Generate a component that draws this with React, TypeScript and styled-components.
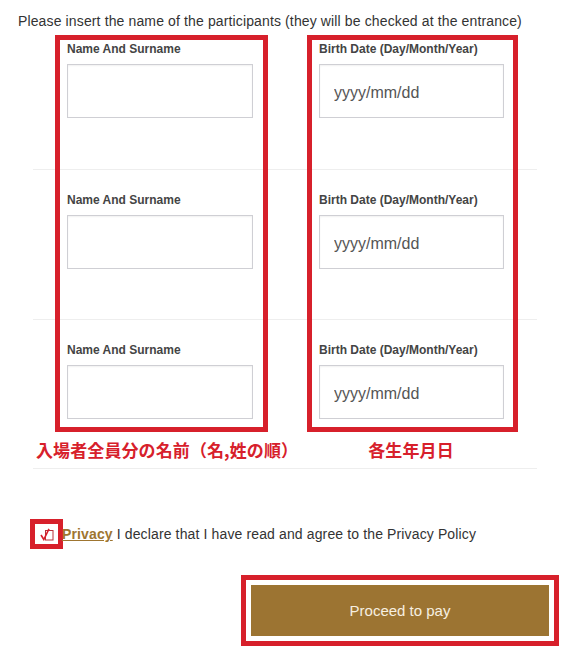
import styled, { createGlobalStyle } from "styled-components";

const GlobalStyle = createGlobalStyle`
  html, body {
    margin: 0;
    padding: 0;
    background: #fff;
  }
  body {
    font-family: "Liberation Sans", Arial, sans-serif;
    color: #333;
  }
  * {
    box-sizing: border-box;
  }
`;

const Page = styled.div`
  width: 575px;
  height: 660px;
  padding-top: 11px;
`;

const Intro = styled.p`
  margin: 0 0 0 18px;
  font-size: 14px;
  line-height: 20px;
  letter-spacing: 0.13px;
  color: #333;
  white-space: nowrap;
`;

const Form = styled.div`
  position: relative;
  width: 504px;
  margin-left: 33px;
`;

const Row = styled.div<{ $first?: boolean; $last?: boolean }>`
  display: grid;
  grid-template-columns: 252px 252px;
  height: ${(p) => (p.$first ? "138px" : p.$last ? "auto" : "150px")};
  padding-top: ${(p) => (p.$first ? "11px" : "23px")};
  border-top: ${(p) => (p.$first ? "none" : "1px solid #eeeeee")};
`;

const Field = styled.div`
  padding-left: 34px;
`;

const Label = styled.div`
  font-size: 12px;
  line-height: 14px;
  font-weight: bold;
  color: #444;
  margin-bottom: 8px;
`;

const Input = styled.input<{ $w: number }>`
  display: block;
  width: ${(p) => p.$w}px;
  height: 54px;
  border: 1px solid #cfcfd4;
  box-shadow: inset 0 1px 2px rgba(0, 0, 0, 0.06);
  background: #fff;
  padding: 3px 14px 0;
  font-family: "Liberation Sans", Arial, sans-serif;
  font-size: 16px;
  color: #555;
  outline: none;

  &::placeholder {
    color: #555;
  }
`;

const CaptionRow = styled.div`
  display: grid;
  grid-template-columns: 252px 252px;
  margin-top: 19px;
  padding-bottom: 6px;
  border-bottom: 1px solid #eeeeee;
`;

const Caption = styled.div<{ $align: "left" | "center"; $pad: number }>`
  text-align: ${(p) => p.$align};
  padding-left: ${(p) => p.$pad}px;
  white-space: nowrap;
  font-family: "Noto Sans CJK JP", "Liberation Sans", sans-serif;
  font-size: 17px;
  line-height: 24px;
  font-weight: bold;
  letter-spacing: 0.1px;
  color: #d7202b;
`;

const Highlight = styled.div<{ $left: number; $width: number }>`
  position: absolute;
  top: 4px;
  left: ${(p) => p.$left}px;
  width: ${(p) => p.$width}px;
  height: 397px;
  border: 5px solid #d7202b;
  pointer-events: none;
`;

const Agree = styled.div`
  display: flex;
  align-items: center;
  margin: 50px 0 0 30px;
  font-size: 14px;
  letter-spacing: 0.13px;
  color: #333;
  white-space: nowrap;
`;

const CheckFrame = styled.span`
  display: inline-flex;
  align-items: center;
  justify-content: center;
  width: 33px;
  height: 30px;
  border: 5px solid #d7202b;
  margin-right: -1px;
`;

const PrivacyLink = styled.a`
  font-weight: bold;
  color: #9e7530;
  text-decoration: underline;
  margin-right: 4px;
`;

const Actions = styled.div`
  display: flex;
  justify-content: flex-end;
  margin: 26px 16px 0 0;
`;

const ButtonFrame = styled.div`
  border: 5px solid #d7202b;
  padding: 5px;
`;

const PayButton = styled.button`
  display: block;
  width: 298px;
  height: 51px;
  border: none;
  background: #9c7432;
  color: #f6efe0;
  font-family: "Liberation Sans", Arial, sans-serif;
  font-size: 15px;
  cursor: pointer;
`;

const CheckIcon = () => (
  <svg width="14" height="13" viewBox="0 0 14 13">
    <rect x="5.5" y="2.5" width="7.5" height="9.5" fill="none" stroke="#b8333a" strokeWidth="1" />
    <path d="M1 7 L3.8 11.5 L9 0.8" fill="none" stroke="#d7202b" strokeWidth="1.6" />
  </svg>
);

const rows = [0, 1, 2];

export default function App() {
  return (
    <>
      <GlobalStyle />
      <Page>
        <Intro>
          Please insert the name of the participants (they will be checked at the entrance)
        </Intro>
        <Form>
          {rows.map((i) => (
            <Row key={i} $first={i === 0} $last={i === rows.length - 1}>
              <Field>
                <Label>Name And Surname</Label>
                <Input $w={186} type="text" />
              </Field>
              <Field>
                <Label>Birth Date (Day/Month/Year)</Label>
                <Input $w={185} type="text" placeholder="yyyy/mm/dd" />
              </Field>
            </Row>
          ))}
          <CaptionRow>
            <Caption $align="left" $pad={3}>入場者全員分の名前（名,姓の順）</Caption>
            <Caption $align="center" $pad={0}>各生年月日</Caption>
          </CaptionRow>
          <Highlight $left={22} $width={213} />
          <Highlight $left={274} $width={211} />
        </Form>
        <Agree>
          <CheckFrame>
            <CheckIcon />
          </CheckFrame>
          <PrivacyLink href="#">Privacy</PrivacyLink>
          I declare that I have read and agree to the Privacy Policy
        </Agree>
        <Actions>
          <ButtonFrame>
            <PayButton>Proceed to pay</PayButton>
          </ButtonFrame>
        </Actions>
      </Page>
    </>
  );
}
